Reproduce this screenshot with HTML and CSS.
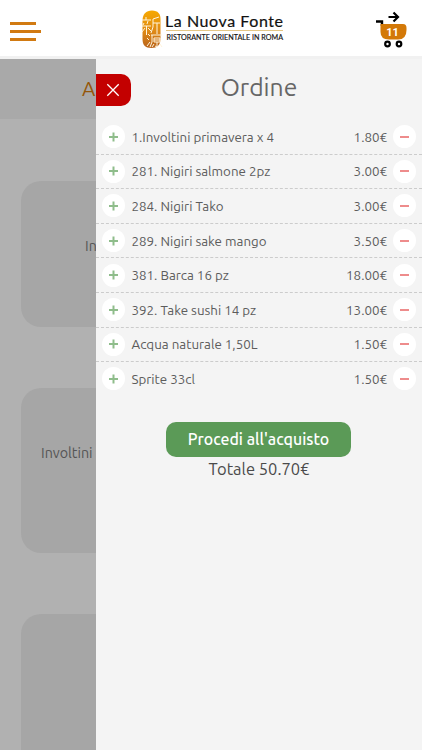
FILE: index.html
```html
<!DOCTYPE html>
<html lang="it">
<head>
    <meta charset="UTF-8">
    <meta name="viewport" content="width=device-width, initial-scale=1">
    <title>La Nuova Fonte</title>
    <link rel="stylesheet" href="styles.css">
</head>
<body>
    <header class="topbar">
        <button class="menu-btn" aria-label="Menu">
            <span class="bar"></span>
            <span class="bar bar-long"></span>
            <span class="bar"></span>
        </button>
        <svg class="logo" width="146" height="42" viewBox="0 0 146 42">
            <defs>
                <linearGradient id="seal" x1="0" y1="0" x2="0" y2="1">
                    <stop offset="0" stop-color="#f6a800"/>
                    <stop offset="0.55" stop-color="#df8a16"/>
                    <stop offset="1" stop-color="#b8631c"/>
                </linearGradient>
            </defs>
            <path d="M12 1.500C18 1.500 20.500 5 20.500 10V30C20.500 36 17 39 11.500 39C5 39 2.500 36 2.500 30V12C2.500 5 6 1.500 12 1.500Z" fill="url(#seal)"/>
            <g fill="none" stroke="#fff4dc" stroke-width="1">
                <path d="M6 8V11M2 11H11M4 14L3 16M8 12L7 15M2 17H11M6.500 17V26M5 19L2 23M8 19L11 22"/>
                <path d="M19 8L13 10V18L11 24M13 14H20M17 14V25"/>
                <path d="M8 25L10 27M7 29L9 31M7 37L10 33M11 26H22M12 26V33L10 38M14 29H20V33H14ZM14 31H20M17 33V38L15 37M14 35L12 38M20 35L22 38"/>
            </g>
            <text class="logo-name" x="25" y="17.500" textLength="118" lengthAdjust="spacing">La Nuova Fonte</text>
            <path d="M26 21.500H143" stroke="#ddb866" stroke-width="0.8"/>
            <text class="logo-sub" x="26.500" y="30.500" textLength="116.500" lengthAdjust="spacingAndGlyphs">RISTORANTE ORIENTALE IN ROMA</text>
        </svg>
        <button class="cart-btn" aria-label="Carrello">
            <svg width="34" height="38" viewBox="0 0 34 38">
                <path d="M13.500 6H23M18.500 1.500L23 6L18.500 10.500" fill="none" stroke="#000" stroke-width="2.200"/>
                <path d="M1 10.500H7V15" fill="none" stroke="#000" stroke-width="2.400"/>
                <path d="M5.500 13H28Q31.500 13 31.500 17V19Q31.500 28.500 23 28.500H14Q5.500 28.500 5.500 21Z" fill="#d37908"/>
                <circle cx="12.500" cy="33" r="2.300" fill="#fff" stroke="#000" stroke-width="2.200"/>
                <circle cx="24" cy="33" r="2.300" fill="#fff" stroke="#000" stroke-width="2.200"/>
                <text class="cart-count" x="17.500" y="25" text-anchor="middle">11</text>
            </svg>
        </button>
    </header>

    <div class="page">
        <main class="menu">
            <h2 class="menu-title">A</h2>
            <div class="dish">In</div>
            <div class="dish dish-tall">Involtini</div>
            <div class="dish dish-tall"></div>
        </main>

        <aside class="order">
            <button class="close-btn" aria-label="Chiudi">
                <svg width="14" height="14" viewBox="0 0 14 14">
                    <path d="M1.300 1.300L12.700 12.700M12.700 1.300L1.300 12.700" stroke="#fff" stroke-width="1.300"/>
                </svg>
            </button>
            <h1 class="order-title">Ordine</h1>
            <ul class="items">
                <li class="item"><button class="round plus"></button><span class="name">1.Involtini primavera x 4</span><span class="price">1.80€</span><button class="round minus"></button></li>
                <li class="item"><button class="round plus"></button><span class="name">281. Nigiri salmone 2pz</span><span class="price">3.00€</span><button class="round minus"></button></li>
                <li class="item"><button class="round plus"></button><span class="name">284. Nigiri Tako</span><span class="price">3.00€</span><button class="round minus"></button></li>
                <li class="item"><button class="round plus"></button><span class="name">289. Nigiri sake mango</span><span class="price">3.50€</span><button class="round minus"></button></li>
                <li class="item"><button class="round plus"></button><span class="name">381. Barca 16 pz</span><span class="price">18.00€</span><button class="round minus"></button></li>
                <li class="item"><button class="round plus"></button><span class="name">392. Take sushi 14 pz</span><span class="price">13.00€</span><button class="round minus"></button></li>
                <li class="item"><button class="round plus"></button><span class="name">Acqua naturale 1,50L</span><span class="price">1.50€</span><button class="round minus"></button></li>
                <li class="item"><button class="round plus"></button><span class="name">Sprite 33cl</span><span class="price">1.50€</span><button class="round minus"></button></li>
            </ul>
            <button class="checkout">Procedi all'acquisto</button>
            <p class="total">Totale 50.70€</p>
        </aside>
    </div>
</body>
</html>
```

FILE: styles.css
```css
* {
    box-sizing: border-box;
}

body {
    margin: 0;
    height: 100vh;
    overflow: hidden;
    display: flex;
    flex-direction: column;
    font-family: Ubuntu, "Noto Sans", sans-serif;
    color: #5c5c5c;
}

button {
    padding: 0;
    border: none;
    background: none;
    font-family: inherit;
    cursor: pointer;
}

/* top bar */
.topbar {
    flex: none;
    height: 59px;
    display: flex;
    align-items: flex-start;
    padding: 0 13px 0 10px;
    background: #fff;
    border-bottom: 3px solid #f1f1f1;
}

.menu-btn {
    width: 34px;
    margin-top: 22px;
    display: flex;
    flex-direction: column;
    gap: 5px;
}

.bar {
    width: 26px;
    height: 3px;
    background: #d17a12;
}

.bar-long {
    width: 31px;
}

.logo {
    margin: 9px 0 0 96px;
}

.logo-name {
    font-family: Lato, sans-serif;
    font-size: 16px;
    fill: #111;
    stroke: #111;
    stroke-width: 0.2px;
}

.logo-sub {
    font-family: Lato, sans-serif;
    font-size: 7.2px;
    fill: #111;
    stroke: #111;
    stroke-width: 0.15px;
}

.cart-btn {
    width: 34px;
    height: 38px;
    margin: 11px 0 0 auto;
}

.cart-btn svg {
    display: block;
}

.cart-count {
    font-family: Roboto, sans-serif;
    font-size: 11px;
    font-weight: bold;
    fill: #fff;
}

/* dimmed menu behind the order panel */
.page {
    flex: 1;
    min-height: 0;
    display: flex;
    background: #b1b1b1;
}

.menu {
    width: 96px;
    flex: none;
    overflow: hidden;
    white-space: nowrap;
}

.menu-title {
    height: 60px;
    margin: 0 0 62px;
    padding-left: 82px;
    background: #a9a9a9;
    color: #945609;
    font-size: 20.5px;
    font-weight: normal;
    line-height: 60px;
}

.dish {
    height: 146px;
    margin: 0 -20px 61px 21px;
    padding: 52px 0 0 64px;
    border-radius: 20px;
    background: #a6a6a6;
    color: #555;
    font-size: 14.3px;
    line-height: 26px;
}

.dish-tall {
    height: 165px;
    padding-left: 20px;
}

/* order panel */
.order {
    position: relative;
    flex: 1;
    display: flex;
    flex-direction: column;
    align-items: center;
    background: #f4f4f4;
}

.close-btn {
    position: absolute;
    top: 15px;
    left: 0;
    width: 34.5px;
    height: 32px;
    display: flex;
    justify-content: center;
    align-items: center;
    background: #c30000;
    border-radius: 0 10px 10px 0;
}

.order-title {
    margin: 10px 0 0;
    font-size: 24.7px;
    font-weight: normal;
    line-height: 36px;
    color: #666;
}

.items {
    width: 100%;
    margin: 15px 0 0;
    padding: 0;
    list-style: none;
}

.item {
    height: 34.6px;
    display: flex;
    align-items: center;
    padding: 0 6px;
    border-bottom: 1px dashed #ccc;
    font-size: 13.35px;
}

.item:last-child {
    border-bottom-color: transparent;
}

.round {
    position: relative;
    flex: none;
    width: 23px;
    height: 23px;
    border-radius: 50%;
    background: #fff;
}

.round::before,
.plus::after {
    content: "";
    position: absolute;
    top: 10.5px;
    left: 7px;
    width: 9px;
    height: 2px;
    background: #8fbd8b;
}

.plus::after {
    transform: rotate(90deg);
}

.minus::before {
    background: #ee8c8c;
}

.name {
    flex: 1;
    margin-left: 6.5px;
    padding-top: 1px;
}

.price {
    margin-right: 6px;
    padding-top: 1px;
}

.checkout {
    width: 185px;
    height: 35px;
    margin: 25px 1px 0 0;
    border-radius: 10px;
    background: #5b9a57;
    color: #fff;
    font-size: 15.9px;
    font-weight: 500;
}

.total {
    margin: 0;
    font-size: 16.5px;
    line-height: 25px;
    color: #4a4a4a;
}
```
